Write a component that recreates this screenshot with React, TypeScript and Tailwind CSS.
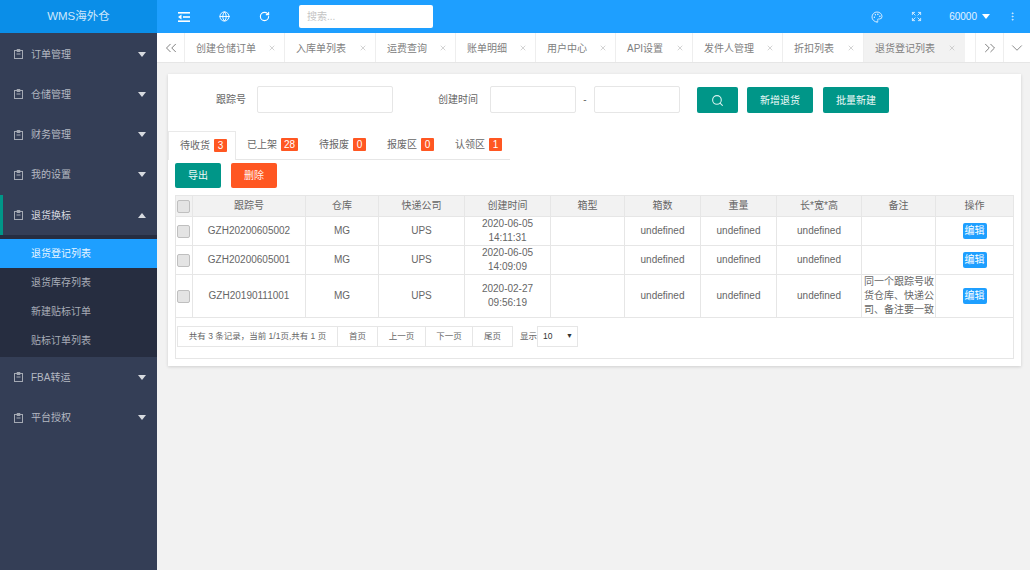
import React from "react";
import { ChevronDown, ChevronsLeft, ChevronsRight, EllipsisVertical, Expand, Globe, Palette, RotateCw, Search, X } from "lucide-react";

const menus = ["订单管理", "仓储管理", "财务管理", "我的设置"];
const subMenus = ["退货登记列表", "退货库存列表", "新建贴标订单", "贴标订单列表"];
const tabs = [
  { label: "创建仓储订单", width: "w-[100px]" },
  { label: "入库单列表", width: "w-[91px]" },
  { label: "运费查询", width: "w-[80px]" },
  { label: "账单明细", width: "w-[80px]" },
  { label: "用户中心", width: "w-[80px]" },
  { label: "API设置", width: "w-[77px]" },
  { label: "发件人管理", width: "w-[90px]" },
  { label: "折扣列表", width: "w-[81px]" },
];
const statusTabs = [
  { label: "待收货", count: 3, width: "w-[68px]" },
  { label: "已上架", count: 28, width: "w-[72px]" },
  { label: "待报废", count: 0, width: "w-[68px]" },
  { label: "报废区", count: 0, width: "w-[68px]" },
  { label: "认领区", count: 1, width: "w-[66px]" },
];
const columns = ["跟踪号", "仓库", "快递公司", "创建时间", "箱型", "箱数", "重量", "长*宽*高", "备注", "操作"];
const rows = [
  { no: "GZH20200605002", date: "2020-06-05", time: "14:11:31", note: "", height: "h-[29px]" },
  { no: "GZH20200605001", date: "2020-06-05", time: "14:09:09", note: "", height: "h-[29px]" },
  { no: "GZH20190111001", date: "2020-02-27", time: "09:56:19", note: "同一个跟踪号收货仓库、快递公司、备注要一致", height: "h-[43px]" },
];
const pagerButtons = [
  { label: "首页", width: "w-[40px]" },
  { label: "上一页", width: "w-[48px]" },
  { label: "下一页", width: "w-[47px]" },
  { label: "尾页", width: "w-[40px]" },
];

function Caret({ up }: { up?: boolean }) {
  return (
    <svg width="8" height="5" viewBox="0 0 8 5" className="shrink-0">
      <path d={up ? "M4 0 L8 5 H0 Z" : "M0 0 H8 L4 5 Z"} fill="currentColor" />
    </svg>
  );
}

function MenuIcon() {
  return (
    <svg width="9" height="10" viewBox="0 0 9 10" fill="none" stroke="currentColor" strokeWidth="1" className="mr-2 shrink-0">
      <rect x="0.5" y="1.5" width="8" height="8" />
      <path d="M3 0.5 H6 V2.5 H3 Z M2.5 5 H6.5" />
    </svg>
  );
}

function FoldIcon() {
  return (
    <svg width="12" height="10" viewBox="0 0 12 10" fill="currentColor" className="ml-[21px] shrink-0">
      <rect x="0" y="0" width="12" height="1.6" />
      <rect x="5" y="4.2" width="7" height="1.6" />
      <rect x="0" y="8.4" width="12" height="1.6" />
      <path d="M3.5 2.5 V7.5 L0 5 Z" />
    </svg>
  );
}

function MenuItem({ label, active }: { label: string; active?: boolean }) {
  return (
    <div className={`flex h-[40.25px] items-center pr-[11px] text-[10px] ${active ? "border-l-[3px] border-[#009688] pl-[11px] text-[#d8dbe0]" : "pl-[14px] text-[#b4b9c2]"}`}>
      <span className="text-[#a4a9b3]"><MenuIcon /></span>
      <span className="flex-1">{label}</span>
      <span className="text-[#d8dbe0]"><Caret up={active} /></span>
    </div>
  );
}

function Sidebar() {
  return (
    <aside className="flex w-[157px] shrink-0 flex-col bg-[#343e56]">
      <div className="flex h-[33px] items-center justify-center bg-[#0a8ee8] text-[11.5px] text-[#cfe8fb]">WMS海外仓</div>
      <nav className="pt-[1px]">
        {menus.map((m) => (
          <MenuItem key={m} label={m} />
        ))}
        <MenuItem label="退货换标" active />
        <div className="bg-[#262d40] pb-[2px] pt-[4px] text-[10px]">
          {subMenus.map((s, i) => (
            <div key={s} className={`flex h-[29px] items-center pl-[31px] ${i === 0 ? "bg-[#1e9fff] text-[#e8f5ff]" : "text-[#a9aeb8]"}`}>
              {s}
            </div>
          ))}
        </div>
        <MenuItem label="FBA转运" />
        <MenuItem label="平台授权" />
      </nav>
    </aside>
  );
}

function Header() {
  return (
    <header className="flex h-[33px] items-center bg-[#1e9fff] pr-[12px] text-white">
      <FoldIcon />
      <Globe size={11} className="ml-[29px] shrink-0" />
      <RotateCw size={11} strokeWidth={2.5} className="ml-[29px] shrink-0" />
      <div className="ml-[29px] flex h-[23px] w-[134px] items-center rounded-[2px] bg-white pl-2 text-[10px] text-[#c4c4c4]">搜索...</div>
      <div className="ml-auto flex items-center">
        <Palette size={12} className="text-[#d5ecff]" />
        <Expand size={11} className="ml-[28px] text-[#d5ecff]" />
        <span className="ml-[27px] text-[10px] text-[#e4f3ff]">60000</span>
        <span className="ml-[5px]"><Caret /></span>
        <EllipsisVertical size={11} className="ml-[17px] text-[#d5ecff]" />
      </div>
    </header>
  );
}

function TabBar() {
  return (
    <div className="flex h-[30px] items-stretch border-b border-[#e6e6e6] bg-white text-[10px] text-[#808080]">
      <div className="flex w-[28px] items-center justify-center border-r border-[#eeeeee] text-[#666666]">
        <ChevronsLeft size={18} strokeWidth={1.1} />
      </div>
      {tabs.map((t) => (
        <div key={t.label} className={`flex ${t.width} items-center justify-between border-r border-[#eeeeee] pl-[11px] pr-[8px] pt-[1px]`}>
          <span>{t.label}</span>
          <X size={8} className="text-[#bdbdbd]" />
        </div>
      ))}
      <div className="flex w-[101px] items-center justify-between bg-[#f2f2f2] pl-[11px] pr-[9px] pt-[1px]">
        <span>退货登记列表</span>
        <X size={8} className="text-[#bdbdbd]" />
      </div>
      <div className="ml-[10px] flex w-[29px] items-center justify-center border-x border-[#eeeeee] text-[#666666]">
        <ChevronsRight size={18} strokeWidth={1.1} />
      </div>
      <div className="flex flex-1 items-center justify-center text-[#666666]">
        <ChevronDown size={18} strokeWidth={1} />
      </div>
    </div>
  );
}

function FilterInput({ width }: { width: string }) {
  return <div className={`h-[27px] ${width} rounded-[2px] border border-[#e6e6e6] bg-white`} />;
}

function FilterRow() {
  return (
    <div className="flex h-[57px] items-start pt-[12px] text-[10px] text-[#666666]">
      <span className="ml-[48px] leading-[27px]">跟踪号</span>
      <div className="ml-[11px]"><FilterInput width="w-[136px]" /></div>
      <span className="ml-[45px] leading-[27px]">创建时间</span>
      <div className="ml-[12px]"><FilterInput width="w-[86px]" /></div>
      <span className="mx-[7px] w-[4px] text-center leading-[27px]">-</span>
      <FilterInput width="w-[86px]" />
      <button className="ml-[17px] mt-[1px] flex h-[26px] w-[41px] items-center justify-center rounded-[2px] bg-[#009688] text-[#d9f2ef]">
        <Search size={13} />
      </button>
      <button className="ml-[9px] mt-[1px] h-[26px] w-[66px] rounded-[2px] bg-[#009688] text-[#eefaf8]">新增退货</button>
      <button className="ml-[10px] mt-[1px] h-[26px] w-[66px] rounded-[2px] bg-[#009688] text-[#eefaf8]">批量新建</button>
    </div>
  );
}

function StatusTabs() {
  return (
    <div className="flex h-[29px] w-[342px] border-b border-[#e6e6e6] text-[10px] text-[#666666]">
      {statusTabs.map((t, i) => (
        <div
          key={t.label}
          className={`flex h-[29px] items-center gap-[4px] pb-[2px] ${t.width} ${i === 0 ? "border-x border-t border-[#e9e9e9] border-b-0 bg-white pl-[11px]" : "pl-[11px]"}`}
        >
          <span>{t.label}</span>
          <span className="flex h-[13px] min-w-[13px] items-center justify-center rounded-[1px] bg-[#ff5722] px-[3px] text-[10px] text-white">{t.count}</span>
        </div>
      ))}
    </div>
  );
}

function Check() {
  return <span className="block h-[13px] w-[13px] rounded-[2px] border border-[#bfbfbf] bg-[#e4e4e4]" />;
}

function DataTable() {
  return (
    <table className="w-full table-fixed border-collapse text-center text-[10px] leading-[14px] text-[#666666]">
      <colgroup>
        <col className="w-[17px]" />
        <col className="w-[113px]" />
        <col className="w-[73px]" />
        <col className="w-[86px]" />
        <col className="w-[86px]" />
        <col className="w-[74px]" />
        <col className="w-[76px]" />
        <col className="w-[76px]" />
        <col className="w-[85px]" />
        <col className="w-[74px]" />
        <col />
      </colgroup>
      <thead>
        <tr className="h-[21px] bg-[#f2f2f2]">
          <th className="border border-[#e6e6e6] p-0 pl-[1px]"><Check /></th>
          {columns.map((c) => (
            <th key={c} className="border border-[#e6e6e6] p-0 font-normal">{c}</th>
          ))}
        </tr>
      </thead>
      <tbody>
        {rows.map((r) => (
          <tr key={r.no} className={r.height}>
            <td className="border border-[#e6e6e6] p-0 pl-[1px]"><Check /></td>
            <td className="border border-[#e6e6e6] p-0">{r.no}</td>
            <td className="border border-[#e6e6e6] p-0">MG</td>
            <td className="border border-[#e6e6e6] p-0">UPS</td>
            <td className="border border-[#e6e6e6] p-0">{r.date}<br />{r.time}</td>
            <td className="border border-[#e6e6e6] p-0" />
            <td className="border border-[#e6e6e6] p-0">undefined</td>
            <td className="border border-[#e6e6e6] p-0">undefined</td>
            <td className="border border-[#e6e6e6] p-0">undefined</td>
            <td className="border border-[#e6e6e6] py-0 pl-[2px] pr-0 text-left">{r.note}</td>
            <td className="border border-[#e6e6e6] p-0">
              <span className="inline-flex h-[16px] w-[24px] items-center justify-center rounded-[2px] bg-[#1e9fff] text-[10px] text-white">编辑</span>
            </td>
          </tr>
        ))}
      </tbody>
    </table>
  );
}

function Pager() {
  return (
    <div className="h-[41px] border border-t-0 border-[#e6e6e6] pl-[1px] pt-[8px] text-[8.5px] text-[#666666]">
      <div className="flex h-[21px] items-stretch">
        <div className="flex w-[161px] items-center justify-center border border-[#e6e6e6]">共有 3 条记录，当前 1/1页,共有 1 页</div>
        {pagerButtons.map((b) => (
          <div key={b.label} className={`flex ${b.width} items-center justify-center border border-l-0 border-[#e6e6e6]`}>{b.label}</div>
        ))}
        <span className="ml-[7px] flex w-[17px] items-center whitespace-nowrap">显示</span>
        <div className="flex w-[41px] items-center justify-between border border-[#e6e6e6] pl-[5px] pr-[4px] text-[#333333]">
          <span>10</span>
          <span className="text-[7px]">▼</span>
        </div>
      </div>
    </div>
  );
}

export default function App() {
  return (
    <div className="flex h-[570px] w-[1030px] overflow-hidden bg-[#f2f2f2] font-['Liberation_Sans','Noto_Sans_CJK_SC',sans-serif]">
      <Sidebar />
      <main className="flex min-w-0 flex-1 flex-col">
        <Header />
        <TabBar />
        <div className="ml-[11px] mr-[9px] mt-[11px] bg-white pb-[7px] shadow-[0_1px_3px_rgba(0,0,0,0.15)]">
          <FilterRow />
          <StatusTabs />
          <div className="flex gap-[10px] pl-[7px] pt-[3px]">
            <button className="h-[25px] w-[46px] rounded-[2px] bg-[#009688] text-[10px] text-[#eefaf8]">导出</button>
            <button className="h-[25px] w-[46px] rounded-[2px] bg-[#ff5722] text-[10px] text-[#fff2ee]">删除</button>
          </div>
          <div className="ml-[7px] mr-[7px] mt-[7px]">
            <DataTable />
            <Pager />
          </div>
        </div>
      </main>
    </div>
  );
}
